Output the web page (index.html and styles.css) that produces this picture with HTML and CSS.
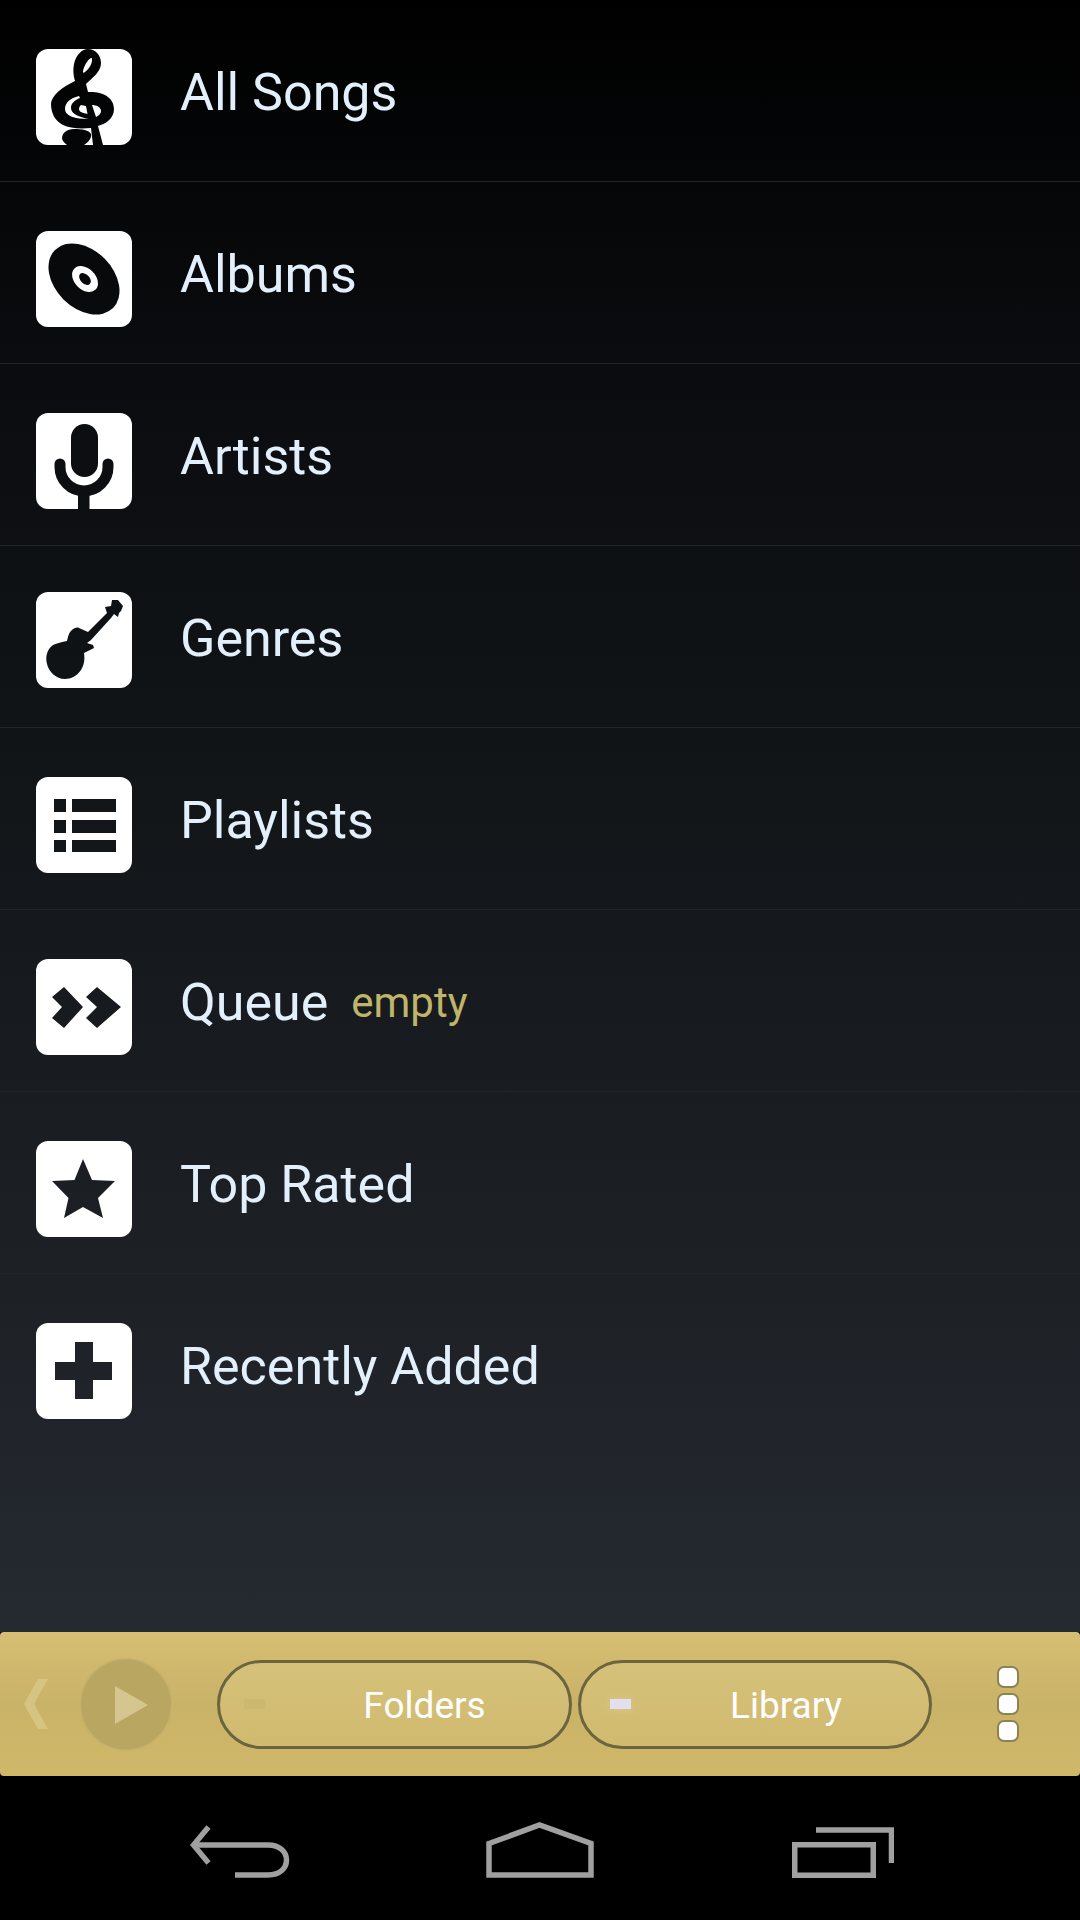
FILE: index.html
```html
<!doctype html>

<html>
	<head>
		<title>Library</title>
		<meta charset="utf-8" />

		<link rel="stylesheet" href="styles.css">
	</head>

	<body>
		<div class="list">
			<div class="row">
				<svg class="icon" viewBox="0 0 96 96">
					<mask id="m-songs">
						<rect width="96" height="96" rx="12" fill="#fff"/>
						<path fill="#000" d="M52 0C59 0 65 6 65 14C65 23 56 29 50 35L52 43C64 42 78 47 78 60C78 70 69 75 62 77L67 96H57L55 79C43 80 33 79 27 76C19 72 15 64 15 55C15 47 26 38 39 32C37 26 37 20 38 15C40 6 46 0 52 0Z"/>
						<path fill="#fff" d="M55 9C52 10 48 17 47 22C46.500 24 48 24 49 23C53 20 56 15 56 11C56 9 56 9 55 9Z"/>
						<path fill="#fff" d="M43 47C34 49 29 54 29 60C29 67 39 70 53 70C43 68 35 65 35 59C35 54 39 51 44 49Z"/>
						<path fill="#fff" d="M45 56L50 57L51.500 65C47 64 43 63 43 60C43 58 44 57 45 56Z"/>
						<path fill="#fff" d="M56 56C60 56 65 58 65 62C65 65 62 67 60 68Z"/>
						<path fill="#000" d="M26 89C26 84 31 80 38 80C46 80 53 81 55 85C56 88 53 93 48 96H31C28 94 26 91 26 89Z"/>
					</mask>
					<rect class="icon-fill" width="96" height="96" mask="url(#m-songs)"/>
				</svg>
				<span class="label">All Songs</span>
			</div>
			<div class="row">
				<svg class="icon" viewBox="0 0 96 96">
					<mask id="m-albums">
						<rect width="96" height="96" rx="12" fill="#fff"/>
						<ellipse cx="48" cy="48" rx="41" ry="29" transform="rotate(45 48 48)" fill="#000"/>
						<ellipse cx="49" cy="48" rx="15" ry="10.500" transform="rotate(45 49 48)" fill="#fff"/>
						<ellipse cx="49" cy="48" rx="7" ry="4.500" transform="rotate(45 49 48)" fill="#000"/>
					</mask>
					<rect class="icon-fill" width="96" height="96" mask="url(#m-albums)"/>
				</svg>
				<span class="label">Albums</span>
			</div>
			<div class="row">
				<svg class="icon" viewBox="0 0 96 96">
					<mask id="m-artists">
						<rect width="96" height="96" rx="12" fill="#fff"/>
						<rect x="35" y="11" width="27" height="53" rx="13.500" fill="#000"/>
						<path d="M24 51V54A24 24 0 0 0 72 54V51" fill="none" stroke="#000" stroke-width="11" stroke-linecap="round"/>
						<rect x="42" y="76" width="11.500" height="20" fill="#000"/>
					</mask>
					<rect class="icon-fill" width="96" height="96" mask="url(#m-artists)"/>
				</svg>
				<span class="label">Artists</span>
			</div>
			<div class="row">
				<svg class="icon icon-up" viewBox="0 0 96 96">
					<mask id="m-genres">
						<rect width="96" height="96" rx="12" fill="#fff"/>
						<path fill="#000" d="M52 40L71 21L69 15L75 14L76 8L82 8L87 14L85 19L83 21L82 25L78 22L75 26L55 48L51 51L57 53L58 56L48 61C49 68 48 73 45 78C41 84 35 87 29 87C20 87 13 80 11 72C9 65 11 57 17 53C21 51 26 50 31 49C32 45 33 40 36 38C38 36 41 35 43 36Z"/>
					</mask>
					<rect class="icon-fill" width="96" height="96" mask="url(#m-genres)"/>
				</svg>
				<span class="label">Genres</span>
			</div>
			<div class="row">
				<svg class="icon" viewBox="0 0 96 96">
					<mask id="m-playlists">
						<rect width="96" height="96" rx="12" fill="#fff"/>
						<path fill="#000" d="M18 22H30V35H18ZM36 22H80V35H36ZM18 43H30V56H18ZM36 43H80V56H36ZM18 63H30V75H18ZM36 63H80V75H36Z"/>
					</mask>
					<rect class="icon-fill" width="96" height="96" mask="url(#m-playlists)"/>
				</svg>
				<span class="label">Playlists</span>
			</div>
			<div class="row">
				<svg class="icon" viewBox="0 0 96 96">
					<mask id="m-queue">
						<rect width="96" height="96" rx="12" fill="#fff"/>
						<path fill="#000" d="M16 38L28 28L47 48L28 69L16 59L26 48ZM50 38L61 28L85 48L61 69L50 59L61 48Z"/>
					</mask>
					<rect class="icon-fill" width="96" height="96" mask="url(#m-queue)"/>
				</svg>
				<span class="label">Queue</span>
				<span class="note">empty</span>
			</div>
			<div class="row">
				<svg class="icon" viewBox="0 0 96 96">
					<mask id="m-rated">
						<rect width="96" height="96" rx="12" fill="#fff"/>
						<path fill="#000" d="M47 18L56 39L79 40L62 57L67 77L47 66L28 77L32.500 57L16 40L38.500 39Z"/>
					</mask>
					<rect class="icon-fill" width="96" height="96" mask="url(#m-rated)"/>
				</svg>
				<span class="label">Top Rated</span>
			</div>
			<div class="row">
				<svg class="icon" viewBox="0 0 96 96">
					<mask id="m-added">
						<rect width="96" height="96" rx="12" fill="#fff"/>
						<path fill="#000" d="M39 19H57V39H76V57H57V76H39V57H19V39H39Z"/>
					</mask>
					<rect class="icon-fill" width="96" height="96" mask="url(#m-added)"/>
				</svg>
				<span class="label">Recently Added</span>
			</div>
		</div>

		<div class="bar">
			<svg class="prev" viewBox="0 0 25 50"><path d="M1 25L15 0H25L11 25L25 50H15Z"/></svg>
			<svg class="play" viewBox="0 0 90 91">
				<circle cx="45" cy="45.500" r="46.500" fill="#c5b26b"/>
				<circle cx="45" cy="45.500" r="45" fill="#b9a660"/>
				<path d="M34 27L67 46L34 65Z" fill="#d5c68f"/>
			</svg>
			<div class="tabs">
				<div class="tab tab-folders">
					<span class="dash"></span>
					Folders
				</div>
				<div class="tab tab-library">
					<span class="dash"></span>
					Library
				</div>
			</div>
			<div class="dots">
				<span></span>
				<span></span>
				<span></span>
			</div>
		</div>

		<div class="nav">
			<svg class="nav-back" viewBox="0 0 100 56">
				<path d="M18.500 5L3.500 23L18.500 41"/>
				<path d="M4 23H78C90 23 96.500 30 96.500 38C96.500 46 90 53 78 53H45"/>
			</svg>
			<svg class="nav-home" viewBox="0 0 108 56">
				<path d="M3 21.500L53.500 3L105 21.500V53H3Z"/>
			</svg>
			<svg class="nav-recent" viewBox="0 0 102 56">
				<rect x="2.750" y="22.750" width="78.500" height="30.500"/>
				<path d="M24 8H99.500V41"/>
			</svg>
		</div>
	</body>
</html>
```

FILE: styles.css
```css
*{
	margin:0;
	padding:0;
	box-sizing:border-box;
}

html, body{
	width:1080px;
	height:1920px;
	background:#000;
}

body{
	display:flex;
	flex-direction:column;
	font-family:Roboto, "Liberation Sans", sans-serif;
}

/* menu list */
.list{
	height:1632px;
	background:linear-gradient(#000 0, #0a0c0f 363px, #111417 727px, #191c20 1091px, #252a31 1632px);
}

.row{
	height:182px;
	padding:49px 0 0 36px;
	display:flex;
	align-items:flex-start;
	border-bottom:1px solid #1f262b;
}

.icon{
	width:96px;
	height:96px;
	flex:none;
	margin-right:48px;
}

.icon-up{
	margin-top:-3px;
}

.icon-fill{
	fill:#fff;
}

.label{
	margin-top:14px;
	font-size:52px;
	line-height:60px;
	color:#e3effb;
}

.note{
	margin:14px 0 0 23px;
	font-size:42px;
	line-height:60px;
	color:#bfb46a;
}

/* gold bar */
.bar{
	height:144px;
	padding-left:23px;
	display:flex;
	align-items:center;
	border-radius:4px;
	background:linear-gradient(#d6be72 0, #c9b368 50%, #d0b869 100%);
}

.prev{
	width:25px;
	height:50px;
	margin-right:33px;
	fill:#d6c482;
}

.play{
	width:90px;
	height:91px;
	margin-right:46px;
	overflow:visible;
}

.tabs{
	display:flex;
	gap:6px;
	margin-right:65px;
}

.tab{
	position:relative;
	height:89px;
	padding:3px 0 0 62px;
	display:flex;
	align-items:center;
	justify-content:center;
	border:3px solid #6b653f;
	border-radius:45px;
	background:linear-gradient(#d6c17a, #d0ba6f);
	color:#fff;
	font-size:37px;
}

.tab-folders{
	width:355px;
	padding-left:60px;
}

.tab-library{
	width:354px;
}

.dash{
	position:absolute;
	top:36px;
	width:21px;
	height:10px;
}

.tab-folders .dash{
	left:24px;
	background:#cdb86f;
}

.tab-library .dash{
	left:29px;
	background:#e2dff0;
	box-shadow:0 0 10px #dcc98c;
}

.dots{
	display:flex;
	flex-direction:column;
	gap:5px;
}

.dots span{
	display:block;
	width:22px;
	height:22px;
	border:2px solid #8f8250;
	border-radius:7px;
	background:#fff;
}

/* system buttons */
.nav{
	height:144px;
	padding:46px 0 0 190px;
	display:flex;
	align-items:flex-start;
	background:#000;
}

.nav svg{
	height:56px;
	fill:none;
	stroke:#a0a0a0;
	stroke-width:5.5px;
}

.nav-back{
	width:100px;
	margin-right:196px;
}

.nav-home{
	width:108px;
	margin-right:198px;
}

.nav-recent{
	width:102px;
}
```
